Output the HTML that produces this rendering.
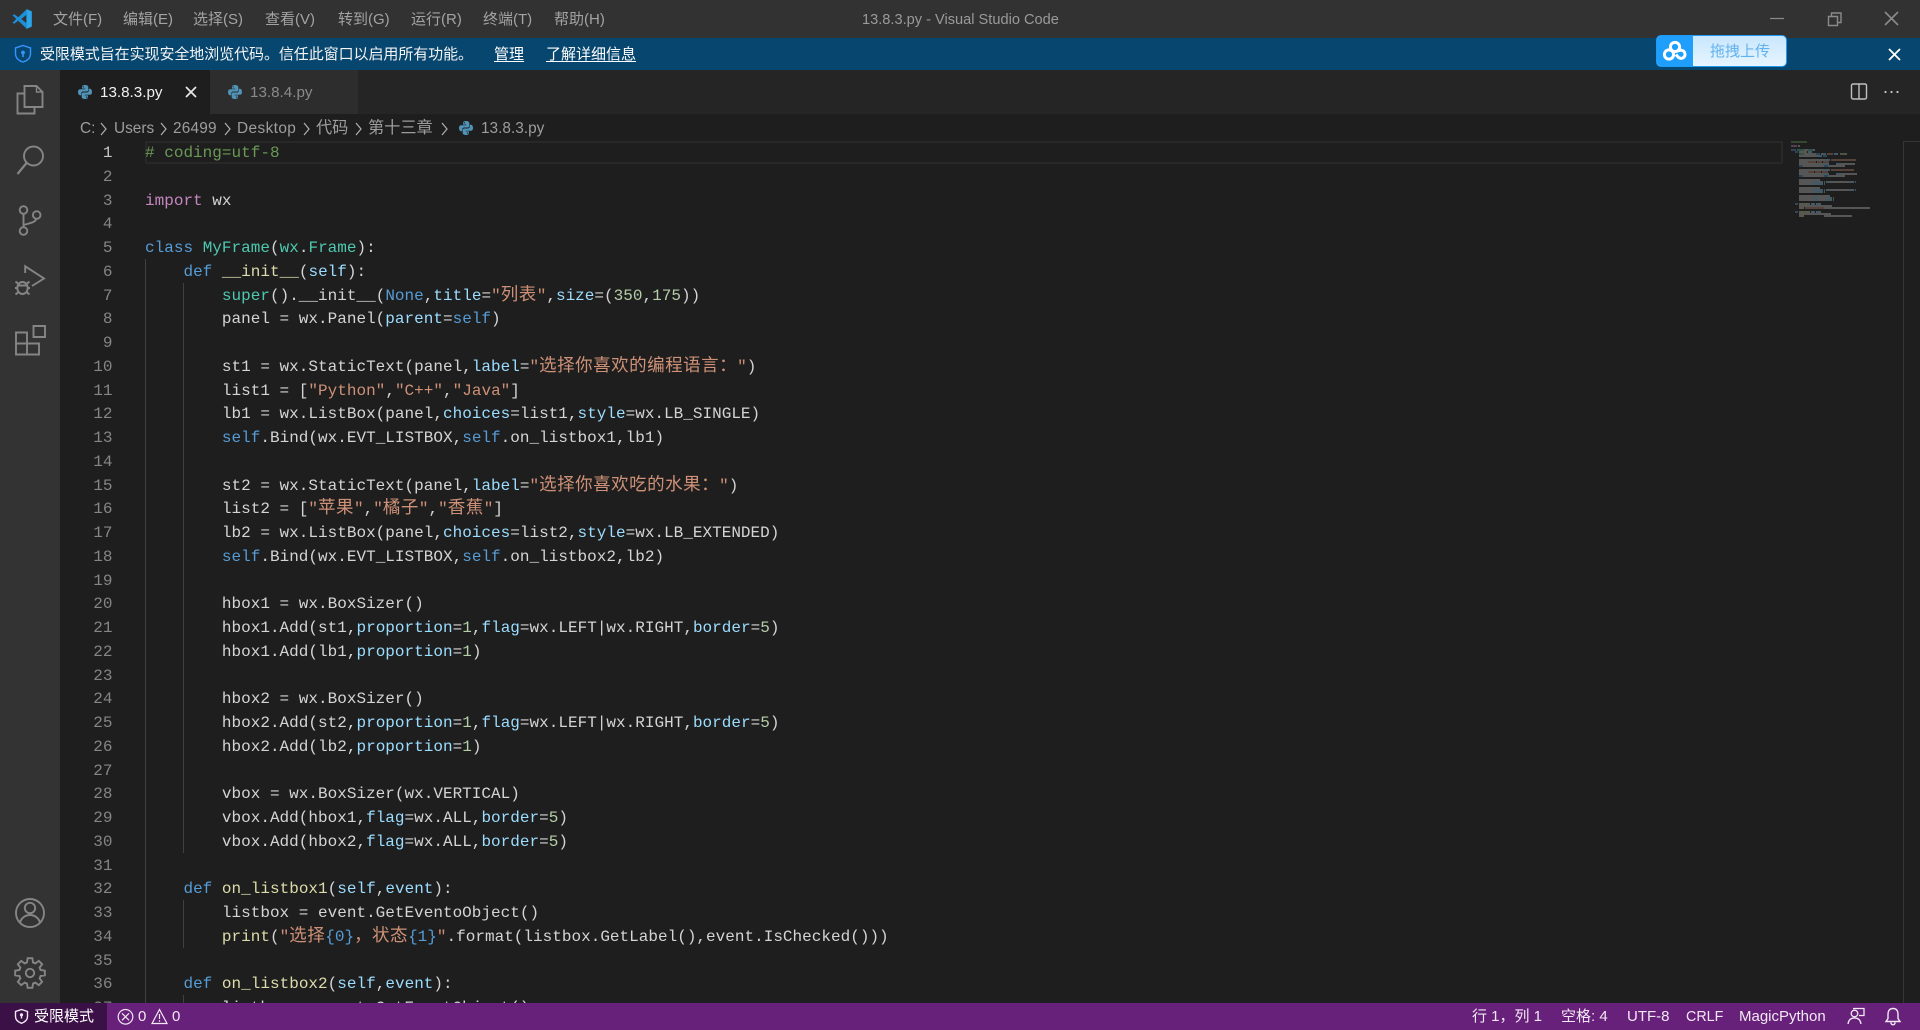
<!DOCTYPE html>
<html lang="zh">
<head>
<meta charset="utf-8">
<title>13.8.3.py - Visual Studio Code</title>
<style>
html,body{margin:0;padding:0;width:1920px;height:1030px;overflow:hidden;background:#1e1e1e}
body{position:relative;font-family:"Liberation Sans","Noto Sans CJK SC",sans-serif;color:#ccc}
.a{position:absolute;white-space:nowrap}
svg{position:absolute;overflow:visible}
#title{left:0;top:0;width:1920px;height:38px;background:#323232}
#banner{left:0;top:38px;width:1920px;height:32px;background:#07466f}
#activity{left:0;top:70px;width:60px;height:933px;background:#333}
#tabs{left:60px;top:70px;width:1860px;height:44px;background:#252526}
#tab1{left:60px;top:70px;width:150px;height:44px;background:#1e1e1e}
#tab2{left:210px;top:70px;width:148px;height:44px;background:#2d2d2d}
#status{left:0;top:1003px;width:1920px;height:27px;background:#68217a}
#restricted{left:0;top:1003px;width:107px;height:27px;background:#3b1047}
.m{top:10px;font-size:15px;line-height:20px;color:#a3a3a3}
.ban{top:44px;font-size:15px;line-height:21px;color:#f4f4f4}
.u{text-decoration:underline;text-underline-offset:2px;color:#fff}
.bc{top:118px;font-size:15.4px;line-height:21px;color:#9d9d9d}
.bcz{font-size:16.2px}
.st{top:1007px;font-size:15px;line-height:20px;color:#f2e8f4}
#editor{left:0;top:140px;width:1920px;height:863px;overflow:hidden}
#gutter{position:absolute;left:60px;top:2px;width:52.5px;text-align:right;color:#858585}
#code{position:absolute;left:145px;top:2px;color:#d4d4d4}
#gutter div,#code div{height:23.75px;line-height:23.75px;white-space:pre;font-family:"Liberation Mono","Noto Sans CJK SC",monospace;font-size:16px;letter-spacing:.01px}
#code i,#code b{font-style:normal;font-weight:normal}
.k{color:#569cd6}.p{color:#c586c0}.t{color:#4ec9b0}.y{color:#dcdcaa}.l{color:#9cdcfe}.s{color:#ce9178}.n{color:#b5cea8}.c{color:#6a9955}
.z{font-size:17.5px;letter-spacing:.5px;color:#ce9178;line-height:1}
.g{position:absolute;width:1px;background:#404040}
</style>
</head>
<body>
<div class="a" id="title"></div>
<div class="a" id="banner"></div>
<div class="a" id="activity"></div>
<div class="a" id="tabs"></div>
<div class="a" id="tab1"></div>
<div class="a" id="tab2"></div>

<svg style="left:12px;top:9px" width="20" height="20" viewBox="0 0 20 20">
<path fill="#2aa5ea" d="M14.4 0 19.8 2.4V17.6L14.4 20 14.4 14.6V5.4z"/>
<path fill="#1c8fd8" d="M14.8 .3 6.2 8.2 2.2 5.2.4 6.1 4.3 10 .4 13.9 2.2 14.8 6.2 11.8 14.8 19.7 15 14.6 9.3 10 15 5.4z"/>
</svg>
<div class="a m" style="left:53px">文件(F)</div>
<div class="a m" style="left:123px">编辑(E)</div>
<div class="a m" style="left:193px">选择(S)</div>
<div class="a m" style="left:265px">查看(V)</div>
<div class="a m" style="left:338px">转到(G)</div>
<div class="a m" style="left:411px">运行(R)</div>
<div class="a m" style="left:483px">终端(T)</div>
<div class="a m" style="left:554px">帮助(H)</div>
<div class="a m" style="left:862px;color:#9a9a9a;font-size:14.6px">13.8.3.py - Visual Studio Code</div>

<svg style="left:0;top:0" width="1920" height="70" fill="none">
<path d="M1770 18.5h14" stroke="#8a8a8a" stroke-width="1.2"/>
<path d="M1828.5 16.5h9v9h-9zM1831.5 16.5v-3.5h9.5v9.5h-3.5" stroke="#8a8a8a" stroke-width="1.4"/>
<path d="M1885 12l13 13M1898 12l-13 13" stroke="#8a8a8a" stroke-width="1.6"/>
<path d="M23 45.5l7.5 2.4v5.6c0 4.4-3.2 7.2-7.5 8.5-4.3-1.3-7.5-4.1-7.5-8.5v-5.6z" stroke="#3794ff" stroke-width="1.4"/>
<circle cx="23" cy="52.5" r="1.9" fill="#3794ff"/><path d="M23 53v4" stroke="#3794ff" stroke-width="1.6"/>
<path d="M1889 49l11 11M1900 49l-11 11" stroke="#fff" stroke-width="1.8"/>
</svg>
<div class="a ban" style="left:40px;letter-spacing:-.07px">受限模式旨在实现安全地浏览代码。信任此窗口以启用所有功能。</div>
<div class="a ban u" style="left:494px">管理</div>
<div class="a ban u" style="left:546px">了解详细信息</div>

<div class="a" style="left:1656px;top:35px;width:131px;height:32px;box-sizing:border-box;border:1.5px solid #1e9bf5;border-radius:5px;background:linear-gradient(#c8e6fd,#e6f5ff);overflow:hidden">
<div class="a" style="left:0;top:0;width:36px;height:30px;background:#1f9ffb"></div>
<div class="a" style="left:53px;top:5px;font-size:15px;line-height:21px;color:#62b2ee">拖拽上传</div>
</div>
<svg style="left:1662px;top:40px" width="26" height="22" fill="none" stroke="#fff" stroke-width="3">
<circle cx="13" cy="7" r="4.6"/><circle cx="7" cy="14.5" r="4.6"/><path d="M16 11c2-1.5 7-1 7 3.5 0 3-3 4.5-5.5 3.5-1.500-.6-2.500-2-3.500-3.500"/>
</svg>

<svg style="left:0;top:0" width="60" height="1030" fill="none" stroke="#858585" stroke-width="1.9">
<path d="M24.500 86h12l6 6v15h-18z"/><path d="M36.500 86v6h6" stroke-width="1.4"/><path d="M24 93.500h-6.500v20h17v-6.500"/>
<circle cx="33.500" cy="156" r="9.500"/><path d="M26.500 163l-9 11" stroke-width="2.200"/>
<circle cx="23.500" cy="210" r="3.800"/><circle cx="23.500" cy="231" r="3.800"/><circle cx="36.700" cy="215" r="3.800"/><path d="M23.500 214v13M36.200 219c-1 3.500-6 4-12.500 6"/>
<path d="M25.200 273v-6.700L44 278.500 32 286"/>
<ellipse cx="22.500" cy="288" rx="5.200" ry="6"/><path d="M17.500 285.500h10M15.500 281.500l3 2.500M29.500 281.500l-3 2.500M15 288h3M27 288h3M15.500 294.500l3-2.500M29.500 294.500l-3-2.500"/>
<path d="M16 332.500h11v22h-11zM16 343.500h23v11h-12"/><path d="M33.500 326h11.500v11h-11.500z"/>
<circle cx="30" cy="913" r="14"/><circle cx="30" cy="908" r="5.200"/><path d="M20 923c1-5.500 6-8 10-8s9 2.500 10 8"/>
<g transform="translate(30 973)"><polygon points="10.57,-3.03 14.82,-2.35 14.82,2.35 10.57,3.03 9.62,5.33 12.14,8.82 8.82,12.14 5.33,9.62 3.03,10.57 2.35,14.82 -2.35,14.82 -3.03,10.57 -5.33,9.62 -8.82,12.14 -12.14,8.82 -9.62,5.33 -10.57,3.03 -14.82,2.35 -14.82,-2.35 -10.57,-3.03 -9.62,-5.33 -12.14,-8.82 -8.82,-12.14 -5.33,-9.62 -3.03,-10.57 -2.35,-14.82 2.35,-14.82 3.03,-10.57 5.33,-9.62 8.82,-12.14 12.14,-8.82 9.62,-5.33"/><circle r="4.200"/></g>
</svg>

<svg width="0" height="0" style="left:0;top:0"><defs>
<g id="py" fill="#4f94b8" fill-rule="evenodd"><path d="M7 0C4.500 0 4 1 4 2v1.600h3.300V4.200H2.200C1 4.200 0 5 0 7s1 3.200 2 3.200h1.200V8.500c0-1.200 1-2 2-2h3.500c1 0 1.600-.7 1.600-1.600V2C10.300.8 9 0 7 0zM5.300 1.100a.7.7 0 1 1 0 1.400.7.7 0 0 1 0-1.400z"/><path d="M7 14c2.500 0 3-1 3-2v-1.600H6.700V9.800h5.100C13 9.800 14 9 14 7s-1-3.200-2-3.200h-1.200v1.700c0 1.200-1 2-2 2H5.300c-1 0-1.600.7-1.600 1.600V12c0 1.200 1.300 2 3.300 2zM8.700 12.900a.7.7 0 1 1 0-1.400.7.7 0 0 1 0 1.400z"/></g>
</defs></svg>
<svg style="left:78px;top:85px" width="14" height="14"><use href="#py"/></svg>
<svg style="left:228px;top:85px" width="14" height="14"><use href="#py"/></svg>
<svg style="left:459px;top:121px" width="14" height="14"><use href="#py"/></svg>
<div class="a" style="left:100px;top:82px;font-size:15.2px;line-height:21px;color:#f0f0f0">13.8.3.py</div>
<svg style="left:0;top:70px" width="1920" height="44" fill="none">
<path d="M186 17l10 10M196 17l-10 10" stroke="#e8e8e8" stroke-width="1.700"/>
<rect x="1851.500" y="14" width="15" height="15" rx="1.500" stroke="#c0c0c0" stroke-width="1.400"/><path d="M1859 14v15" stroke="#c0c0c0" stroke-width="1.400"/>
<circle cx="1885.500" cy="22" r="1.100" fill="#c5c5c5"/><circle cx="1891.500" cy="22" r="1.100" fill="#c5c5c5"/><circle cx="1897.500" cy="22" r="1.100" fill="#c5c5c5"/>
</svg>
<div class="a" style="left:250px;top:82px;font-size:15.2px;line-height:21px;color:#8a8a8a">13.8.4.py</div>

<div class="a bc" style="left:80px">C:</div>
<div class="a bc" style="left:114px">Users</div>
<div class="a bc" style="left:173px;letter-spacing:.2px">26499</div>
<div class="a bc" style="left:237px;letter-spacing:.4px">Desktop</div>
<div class="a bc bcz" style="left:316px">代码</div>
<div class="a bc bcz" style="left:368px">第十三章</div>
<div class="a bc" style="left:481px">13.8.3.py</div>
<svg style="left:0;top:114px" width="460" height="26" fill="none" stroke="#b0b0b0" stroke-width="1.200">
<path d="M101 9l5 6-5 6M161 9l5 6-5 6M225 9l5 6-5 6M304 9l5 6-5 6M356 9l5 6-5 6M442 9l5 6-5 6"/>
</svg>

<div class="a" id="editor">
<div class="a" style="left:145px;top:1px;width:1638px;height:23px;box-sizing:border-box;border:2px solid #282828"></div>
<div class="g" style="left:145px;top:119px;height:744px"></div>
<div class="g" style="left:183px;top:143px;height:570px"></div>
<div class="g" style="left:183px;top:760px;height:48px"></div>
<div class="g" style="left:183px;top:855px;height:8px"></div>
<div class="a" style="left:1903px;top:1px;width:1px;height:862px;background:#353535"></div>
<div class="a" style="left:1903px;top:1px;width:17px;height:1px;background:#353535"></div>
<div id="gutter">
<div style="color:#c6c6c6">1</div><div>2</div><div>3</div><div>4</div><div>5</div><div>6</div><div>7</div><div>8</div><div>9</div><div>10</div><div>11</div><div>12</div><div>13</div><div>14</div><div>15</div><div>16</div><div>17</div><div>18</div><div>19</div><div>20</div><div>21</div><div>22</div><div>23</div><div>24</div><div>25</div><div>26</div><div>27</div><div>28</div><div>29</div><div>30</div><div>31</div><div>32</div><div>33</div><div>34</div><div>35</div><div>36</div><div>37</div>
</div>
<div id="code">
<div class="c"># coding=utf-8</div>
<div> </div>
<div><b class="p">import</b> wx</div>
<div> </div>
<div><b class="k">class</b> <b class="t">MyFrame</b>(<b class="t">wx</b>.<b class="t">Frame</b>):</div>
<div>    <b class="k">def</b> <b class="y">__init__</b>(<b class="l">self</b>):</div>
<div>        <b class="t">super</b>().__init__(<b class="k">None</b>,<b class="l">title</b>=<b class="s">"</b><span class="z">列表</span><b class="s">"</b>,<b class="l">size</b>=(<b class="n">350</b>,<b class="n">175</b>))</div>
<div>        panel = wx.Panel(<b class="l">parent</b>=<b class="k">self</b>)</div>
<div> </div>
<div>        st1 = wx.StaticText(panel,<b class="l">label</b>=<b class="s">"</b><span class="z">选择你喜欢的编程语言：</span><b class="s">"</b>)</div>
<div>        list1 = [<b class="s">"Python"</b>,<b class="s">"C++"</b>,<b class="s">"Java"</b>]</div>
<div>        lb1 = wx.ListBox(panel,<b class="l">choices</b>=list1,<b class="l">style</b>=wx.LB_SINGLE)</div>
<div>        <b class="k">self</b>.Bind(wx.EVT_LISTBOX,<b class="k">self</b>.on_listbox1,lb1)</div>
<div> </div>
<div>        st2 = wx.StaticText(panel,<b class="l">label</b>=<b class="s">"</b><span class="z">选择你喜欢吃的水果：</span><b class="s">"</b>)</div>
<div>        list2 = [<b class="s">"</b><span class="z">苹果</span><b class="s">"</b>,<b class="s">"</b><span class="z">橘子</span><b class="s">"</b>,<b class="s">"</b><span class="z">香蕉</span><b class="s">"</b>]</div>
<div>        lb2 = wx.ListBox(panel,<b class="l">choices</b>=list2,<b class="l">style</b>=wx.LB_EXTENDED)</div>
<div>        <b class="k">self</b>.Bind(wx.EVT_LISTBOX,<b class="k">self</b>.on_listbox2,lb2)</div>
<div> </div>
<div>        hbox1 = wx.BoxSizer()</div>
<div>        hbox1.Add(st1,<b class="l">proportion</b>=<b class="n">1</b>,<b class="l">flag</b>=wx.LEFT|wx.RIGHT,<b class="l">border</b>=<b class="n">5</b>)</div>
<div>        hbox1.Add(lb1,<b class="l">proportion</b>=<b class="n">1</b>)</div>
<div> </div>
<div>        hbox2 = wx.BoxSizer()</div>
<div>        hbox2.Add(st2,<b class="l">proportion</b>=<b class="n">1</b>,<b class="l">flag</b>=wx.LEFT|wx.RIGHT,<b class="l">border</b>=<b class="n">5</b>)</div>
<div>        hbox2.Add(lb2,<b class="l">proportion</b>=<b class="n">1</b>)</div>
<div> </div>
<div>        vbox = wx.BoxSizer(wx.VERTICAL)</div>
<div>        vbox.Add(hbox1,<b class="l">flag</b>=wx.ALL,<b class="l">border</b>=<b class="n">5</b>)</div>
<div>        vbox.Add(hbox2,<b class="l">flag</b>=wx.ALL,<b class="l">border</b>=<b class="n">5</b>)</div>
<div> </div>
<div>    <b class="k">def</b> <b class="y">on_listbox1</b>(<b class="l">self</b>,<b class="l">event</b>):</div>
<div>        listbox = event.GetEventoObject()</div>
<div>        <b class="y">print</b>(<b class="s">"</b><span class="z">选择</span><b class="k">{0}</b><span class="z">，状态</span><b class="k">{1}</b><b class="s">"</b>.format(listbox.GetLabel(),event.IsChecked()))</div>
<div> </div>
<div>    <b class="k">def</b> <b class="y">on_listbox2</b>(<b class="l">self</b>,<b class="l">event</b>):</div>
<div>        listbox = event.GetEventObject()</div>
</div>
</div>

<svg style="left:1791px;top:141px" width="90" height="80" fill="none" stroke-width="1.300" opacity=".5">
<path stroke="#6a9955" d="M0 1h16"/>
<path stroke="#c586c0" d="M0 5h6"/>
<path stroke="#569cd6" d="M0 9h5M4 11h3M25 13h4M32 15h4M8 25h4M33 25h4M8 35h4M33 35h4M4 63h3M4 71h3"/>
<path stroke="#4ec9b0" d="M6 9h7M17 9h5M8 13h5"/>
<path stroke="#dcdcaa" d="M8 11h8M8 63h11M8 67h5M8 71h11M8 75h5"/>
<path stroke="#9cdcfe" d="M17 11h4M30 13h5M43 13h4M25 15h6M34 19h5M31 23h7M45 23h5M34 29h5M31 33h7M45 33h5M22 41h10M35 41h4M57 41h6M22 43h10M22 49h10M35 49h4M57 49h6M22 51h10M23 57h4M35 57h6M23 59h4M35 59h6M20 63h4M25 63h5M20 71h4M25 71h5"/>
<path stroke="#ce9178" d="M36 13h6M40 19h25M17 21h8M26 21h5M32 21h6M40 29h23M17 31h6M24 31h6M31 31h6M14 67h19"/>
<path stroke="#b5cea8" d="M49 13h7M33 41h1M64 41h1M33 43h1M33 49h1M64 49h1M33 51h1M42 57h1M42 59h1"/>
<path stroke="#d4d4d4" d="M7 5h2M13 9h4M22 9h2M13 13h12M8 15h17M8 19h26M8 21h9M8 23h23M50 23h14M12 25h21M37 25h17M8 29h26M8 31h9M8 33h23M50 33h16M12 35h21M37 35h17M8 39h21M8 41h14M39 41h18M8 43h14M8 47h21M8 49h14M39 49h18M8 51h14M8 55h31M8 57h15M27 57h8M8 59h15M27 59h8M8 65h33M33 67h46M8 73h32M33 75h28"/>
</svg>

<div class="a" id="status"></div>
<div class="a" id="restricted"></div>
<svg style="left:0;top:1003px" width="1920" height="27" fill="none" stroke="#f2e8f4" stroke-width="1.200">
<path d="M21.500 6.500l6 2v5c0 3.500-2.500 5.500-6 6.800-3.500-1.300-6-3.300-6-6.800v-5z" stroke-width="1.400"/>
<circle cx="21.500" cy="11.800" r="1.600" fill="#f2e8f4" stroke="none"/><path d="M21.500 12v3.500" stroke-width="1.400"/>
<circle cx="125.500" cy="13.800" r="7.300"/><path d="M122 10.300l7 7M129 10.300l-7 7"/>
<path d="M159.500 6.500l7.500 14h-15z"/><path d="M159.500 11v5M159.500 17.200v1.500"/>
<path d="M1853 5.500h11v7h-5" stroke-width="1.300"/><circle cx="1854.500" cy="10.500" r="3.300" stroke-width="1.300"/><path d="M1848 21c.5-4 3-6 6.500-6s6 2 6.500 6" stroke-width="1.300"/>
<path d="M1893 5.500c-3.500 0-5 2.500-5 5.500v4.500l-2 3h14l-2-3V11c0-3-1.500-5.500-5-5.500zM1890.800 19.500c.3 1.500 1 2.300 2.200 2.300s1.900-.8 2.200-2.300" stroke-width="1.400"/>
</svg>
<div class="a st" style="left:34px;color:#fff">受限模式</div>
<div class="a st" style="left:138px">0</div>
<div class="a st" style="left:172px">0</div>
<div class="a st" style="left:1472px">行 1，列 1</div>
<div class="a st" style="left:1561px">空格: 4</div>
<div class="a st" style="left:1627px">UTF-8</div>
<div class="a st" style="left:1686px;font-size:14.3px">CRLF</div>
<div class="a st" style="left:1739px">MagicPython</div>
</body>
</html>
